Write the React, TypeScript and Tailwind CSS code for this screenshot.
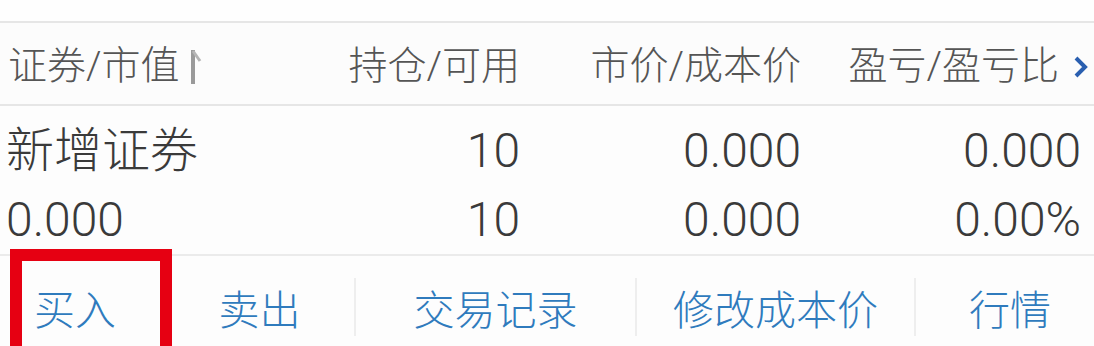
import React from "react";

const font = { fontFamily: 'Roboto, "Noto Sans CJK SC", sans-serif' };

const SortMark: React.FC = () => (
    <svg width="12" height="36" viewBox="0 0 12 36" className="ml-[10px]">
        <path d="M3 1 L3 35" stroke="#9a9a9a" strokeWidth="4" />
        <path d="M3 2 L10 12" stroke="#b5b5b5" strokeWidth="3" />
    </svg>
);

const Chevron: React.FC = () => (
    <svg width="20" height="26" viewBox="0 0 20 26" className="ml-[12px]">
        <polyline points="5,4 14,13 5,22" fill="none" stroke="#2a5fb0" strokeWidth="4" strokeLinejoin="miter" />
    </svg>
);

const rows = [
    ["新增证券", "10", "0.000", "0.000"],
    ["0.000", "10", "0.000", "0.00%"],
];

const actions = [
    { label: "买入", cls: "w-[175px] pr-[25px]" },
    { label: "卖出", cls: "w-[179px] pr-[10px]" },
    { label: "交易记录", cls: "w-[279px]" },
    { label: "修改成本价", cls: "w-[277px]" },
    { label: "行情", cls: "flex-1 pl-[10px]" },
];

export default function App() {
    return (
        <div className="relative w-[1094px] h-[346px] overflow-hidden bg-[#fdfdfd] font-light" style={font}>
            <div className="h-[21px] bg-[#fefefe]" />

            {/* header */}
            <div className="flex items-center h-[85px] pt-[6px] border-t-2 border-b-2 border-[#e6e6e6] bg-[#fcfcfc] text-[39px] text-[#555555]">
                <div className="flex items-center w-[208px] pl-[8px]">
                    <span>证券/市值</span>
                    <SortMark />
                </div>
                <div className="w-[312px] text-right">持仓/可用</div>
                <div className="w-[281px] text-right">市价/成本价</div>
                <div className="flex items-center justify-end w-[290px]">
                    <span>盈亏/盈亏比</span>
                    <Chevron />
                </div>
            </div>

            {/* data */}
            <div className="flex flex-col gap-[9px] pt-[15px] pb-[4px] text-[48px] text-[#3a3a3a]">
                {rows.map((r, i) => (
                    <div key={i} className="flex items-center h-[60px] leading-[60px]">
                        <div className="w-[208px] pl-[6px]">{r[0]}</div>
                        <div className="w-[312px] text-right">{r[1]}</div>
                        <div className="w-[281px] text-right">{r[2]}</div>
                        <div className="w-[280px] text-right">{r[3]}</div>
                    </div>
                ))}
            </div>

            {/* actions */}
            <div className="flex items-stretch h-[90px] border-t-2 border-[#ebebeb] text-[41px] text-[#2f7bbd]">
                {actions.map((a, i) => (
                    <React.Fragment key={a.label}>
                        {i > 1 && <div className="w-[2px] self-end mb-[8px] h-[58px] bg-[#eeeeee]" />}
                        <div className={`flex items-center justify-center pt-[24px] ${a.cls}`}>{a.label}</div>
                    </React.Fragment>
                ))}
            </div>

            {/* annotation box */}
            <div className="absolute left-[10px] top-[249px] w-[162px] h-[110px] border-[12px] border-[#e60012]" />
        </div>
    );
}
